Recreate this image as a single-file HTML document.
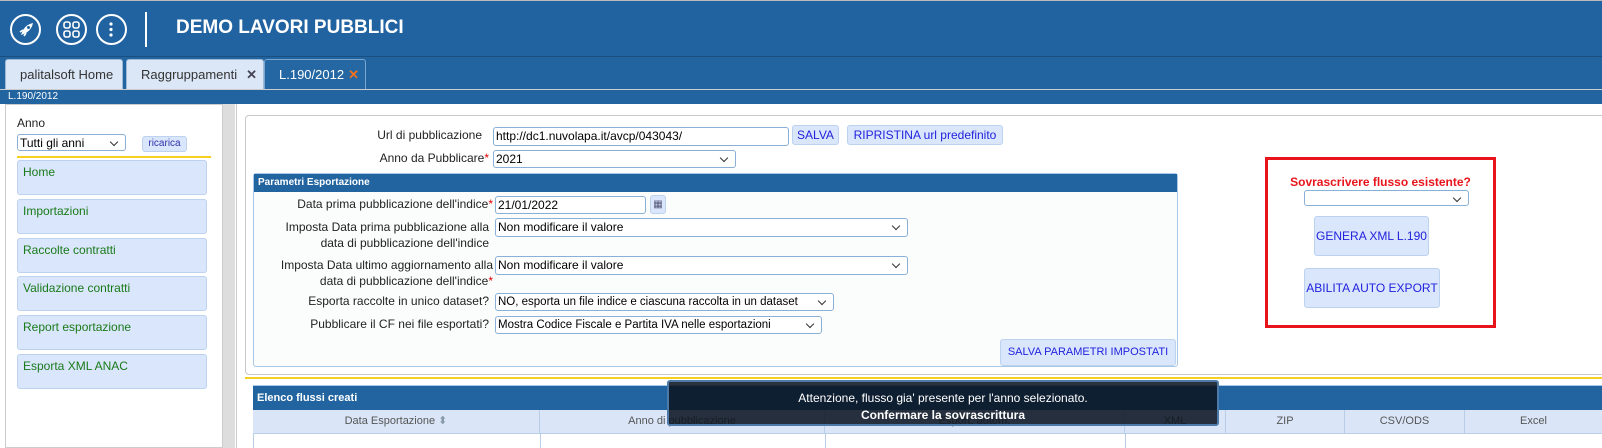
<!DOCTYPE html>
<html><head><meta charset="utf-8"><style>
*{box-sizing:border-box;margin:0;padding:0}
body{width:1602px;height:448px;overflow:hidden;background:#fff;font-family:"Liberation Sans",sans-serif;font-size:12px;color:#222;position:relative}
.abs{position:absolute;white-space:nowrap}
.hdr{left:0;top:0;width:1602px;height:56px;background:#2163a0;border-top:1px solid #bbb}
.circ{width:31px;height:31px;border:2px solid #fff;border-radius:50%;top:14px}
.tabs{left:0;top:56px;width:1602px;height:33px;background:#2264a0;border-top:1px solid #1a4f80}
.tab{top:59px;height:30px;background:#dbe7f7;border:1px solid #9fb9d6;border-bottom:none;border-radius:3px 3px 0 0;font-size:13px;color:#333;line-height:29px;padding-left:14px}
.bar{left:0;top:89px;width:1602px;height:15px;background:#2264a0;border-top:1px solid #ccc;color:#fff;font-size:10px;line-height:14px;padding-left:8px}
.lp{left:5px;top:104px;width:218px;height:344px;background:#fff;border:1px solid #ccc}
.gut{left:223px;top:104px;width:12px;height:344px;background:#ddd}
.mi{left:17px;width:190px;height:35px;background:#d9e6fb;border:1px solid #bcd2ee;border-radius:3px;color:#1a7a1a;font-size:12px;padding:4px 5px}
.sel{background:#fff;border:1px solid #8ab0d6;border-radius:3px;font-size:12px;line-height:16px;padding-left:2px;color:#000;overflow:hidden}
.sel:after{content:"";position:absolute;right:8px;top:4px;width:5px;height:5px;border-right:1.5px solid #333;border-bottom:1.5px solid #333;transform:rotate(45deg)}
.inp{background:#fff;border:1px solid #8ab0d6;border-radius:3px;font-size:12px;line-height:16px;padding-left:2px;color:#000}
.btn{background:#d9e6fb;border:1px solid #bcd2ee;border-radius:3px;color:#2222dd;font-size:12px;text-align:center}
.lbl{font-size:12px;color:#222;text-align:right}
.req{color:#d00}
.th{top:410px;height:23px;background:#dae6f8;border-right:1px solid #b8cde6;color:#555;font-size:11px;text-align:center;line-height:22px}
</style></head><body>
<div class="abs hdr"></div>
<div class="abs circ" style="left:10px"></div>
<svg class="abs" style="left:16px;top:20px" width="20" height="20" viewBox="0 0 20 20"><path d="M5 15 L7 10 Q11 4 17 3 Q16 9 10 13 Z" fill="#fff"/><circle cx="12.5" cy="7.5" r="1.5" fill="#2163a0"/><path d="M4 12 L7 10 M8 16 L10 13" stroke="#fff" stroke-width="1.6"/></svg>
<div class="abs circ" style="left:56px"></div>
<svg class="abs" style="left:63px;top:21px" width="17" height="17"><rect x="1" y="1" width="6" height="6" rx="2" fill="none" stroke="#fff" stroke-width="1.6"/><rect x="10" y="1" width="6" height="6" rx="2" fill="none" stroke="#fff" stroke-width="1.6"/><rect x="1" y="10" width="6" height="6" rx="2" fill="none" stroke="#fff" stroke-width="1.6"/><rect x="10" y="10" width="6" height="6" rx="2" fill="none" stroke="#fff" stroke-width="1.6"/></svg>
<div class="abs circ" style="left:96px"></div>
<svg class="abs" style="left:108px;top:21px" width="6" height="17"><circle cx="3" cy="3" r="1.6" fill="#fff"/><circle cx="3" cy="8.5" r="1.6" fill="#fff"/><circle cx="3" cy="14" r="1.6" fill="#fff"/></svg>
<div class="abs" style="left:145px;top:12px;width:2px;height:35px;background:#fff"></div>
<div class="abs" style="left:176px;top:17px;color:#fff;font-weight:bold;font-size:19px">DEMO LAVORI PUBBLICI</div>
<div class="abs tabs"></div>
<div class="abs tab" style="left:5px;width:118px">palitalsoft Home</div>
<div class="abs tab" style="left:126px;width:138px">Raggruppamenti<span style="position:absolute;right:6px;color:#445;font-weight:bold">✕</span></div>
<div class="abs tab" style="left:264px;width:102px;background:#2467a3;color:#fff;border-color:#7aa6d2">L.190/2012<span style="position:absolute;right:6px;color:#f07020;font-weight:bold">✕</span></div>
<div class="abs bar">L.190/2012</div>
<div class="abs lp"></div>
<div class="abs gut"></div>
<div class="abs" style="left:17px;top:116px;font-size:12px">Anno</div>
<div class="abs sel" style="left:17px;top:134px;width:109px;height:17px">Tutti gli anni</div>
<div class="abs btn" style="left:142px;top:136px;width:45px;height:16px;font-size:10px;line-height:14px;color:#33a">ricarica</div>
<div class="abs" style="left:17px;top:156px;width:194px;height:2px;background:#f5d020"></div>
<div class="abs mi" style="top:160px">Home</div>
<div class="abs mi" style="top:199px">Importazioni</div>
<div class="abs mi" style="top:238px">Raccolte contratti</div>
<div class="abs mi" style="top:276px">Validazione contratti</div>
<div class="abs mi" style="top:315px">Report esportazione</div>
<div class="abs mi" style="top:354px">Esporta XML ANAC</div>

<div class="abs" style="left:236px;top:104px;width:1366px;height:344px;border-left:1px solid #ccc"></div>
<div class="abs" style="left:245px;top:115px;width:1360px;height:260px;border:1px solid #c8c8c8;border-radius:4px"></div>
<div class="abs lbl" style="left:300px;top:128px;width:182px">Url di pubblicazione</div>
<div class="abs inp" style="left:493px;top:127px;width:296px;height:19px;line-height:17px">http://dc1.nuvolapa.it/avcp/043043/</div>
<div class="abs btn" style="left:792px;top:125px;width:47px;height:20px;line-height:18px">SALVA</div>
<div class="abs btn" style="left:847px;top:125px;width:156px;height:20px;line-height:18px">RIPRISTINA url predefinito</div>
<div class="abs lbl" style="left:300px;top:151px;width:189px">Anno da Pubblicare<span class="req">*</span></div>
<div class="abs sel" style="left:493px;top:150px;width:243px;height:18px">2021</div>

<div class="abs" style="left:253px;top:173px;width:925px;height:194px;border:1px solid #a9c7e6;border-radius:3px;background:#fbfdfd"></div>
<div class="abs" style="left:254px;top:174px;width:923px;height:18px;background:#2264a0;color:#fff;font-weight:bold;font-size:10px;line-height:18px;padding-left:4px">Parametri Esportazione</div>
<div class="abs lbl" style="left:260px;top:197px;width:233px">Data prima pubblicazione dell'indice<span class="req">*</span></div>
<div class="abs inp" style="left:495px;top:196px;width:151px;height:18px">21/01/2022</div>
<div class="abs btn" style="left:650px;top:195px;width:16px;height:19px;color:#557;font-size:10px;line-height:17px">▦</div>
<div class="abs lbl" style="left:260px;top:219px;width:229px;line-height:16px">Imposta Data prima pubblicazione alla<br>data di pubblicazione dell'indice</div>
<div class="abs sel" style="left:495px;top:218px;width:413px;height:19px">Non modificare il valore</div>
<div class="abs lbl" style="left:260px;top:257px;width:233px;line-height:16px">Imposta Data ultimo aggiornamento alla<br>data di pubblicazione dell'indice<span class="req">*</span></div>
<div class="abs sel" style="left:495px;top:256px;width:413px;height:19px">Non modificare il valore</div>
<div class="abs lbl" style="left:260px;top:294px;width:229px">Esporta raccolte in unico dataset?</div>
<div class="abs sel" style="left:495px;top:293px;width:339px;height:18px;font-size:11.5px">NO, esporta un file indice e ciascuna raccolta in un dataset</div>
<div class="abs lbl" style="left:260px;top:317px;width:229px">Pubblicare il CF nei file esportati?</div>
<div class="abs sel" style="left:495px;top:316px;width:327px;height:18px;font-size:11.5px">Mostra Codice Fiscale e Partita IVA nelle esportazioni</div>
<div class="abs btn" style="left:1000px;top:339px;width:176px;height:27px;line-height:25px;font-size:11px">SALVA PARAMETRI IMPOSTATI</div>

<div class="abs" style="left:1265px;top:157px;width:231px;height:171px;border:3px solid #e8141c"></div>
<div class="abs" style="left:1265px;top:175px;width:231px;text-align:center;color:#e8141c;font-weight:bold;font-size:12px">Sovrascrivere flusso esistente?</div>
<div class="abs sel" style="left:1304px;top:190px;width:165px;height:16px"></div>
<div class="abs btn" style="left:1314px;top:216px;width:115px;height:40px;line-height:38px">GENERA XML L.190</div>
<div class="abs btn" style="left:1304px;top:268px;width:136px;height:40px;line-height:38px">ABILITA AUTO EXPORT</div>

<div class="abs" style="left:245px;top:377px;width:1357px;height:2px;background:#f5d020"></div>
<div class="abs" style="left:253px;top:385px;width:1349px;height:25px;background:#2264a0;color:#fff;font-weight:bold;font-size:11px;line-height:25px;padding-left:4px;border-top:1px solid #a9c7e6">Elenco flussi creati</div>
<div class="abs th" style="left:253px;width:287px">Data Esportazione <span style="color:#89a">⬍</span></div>
<div class="abs th" style="left:540px;width:285px">Anno di pubblicazione</div>
<div class="abs th" style="left:825px;width:300px">Esport. autom.</div>
<div class="abs th" style="left:1125px;width:101px">XML</div>
<div class="abs th" style="left:1226px;width:119px">ZIP</div>
<div class="abs th" style="left:1345px;width:120px">CSV/ODS</div>
<div class="abs th" style="left:1465px;width:137px;border-right:none">Excel</div>
<div class="abs" style="left:253px;top:433px;width:1349px;height:15px;border-top:1px solid #b8cde6;border-left:1px solid #b8cde6"></div>
<div class="abs" style="left:540px;top:433px;width:1px;height:15px;background:#b8cde6"></div>
<div class="abs" style="left:825px;top:433px;width:1px;height:15px;background:#b8cde6"></div>
<div class="abs" style="left:1125px;top:433px;width:1px;height:15px;background:#b8cde6"></div>

<div class="abs" style="left:667px;top:380px;width:552px;height:46px;background:rgba(12,22,34,0.88);border:2px solid #4d7aa8;border-radius:3px;color:#fff;text-align:center;font-size:12px;padding-top:8px;line-height:17px">Attenzione, flusso gia' presente per l'anno selezionato.<br><b>Confermare la sovrascrittura</b></div>
</body></html>
